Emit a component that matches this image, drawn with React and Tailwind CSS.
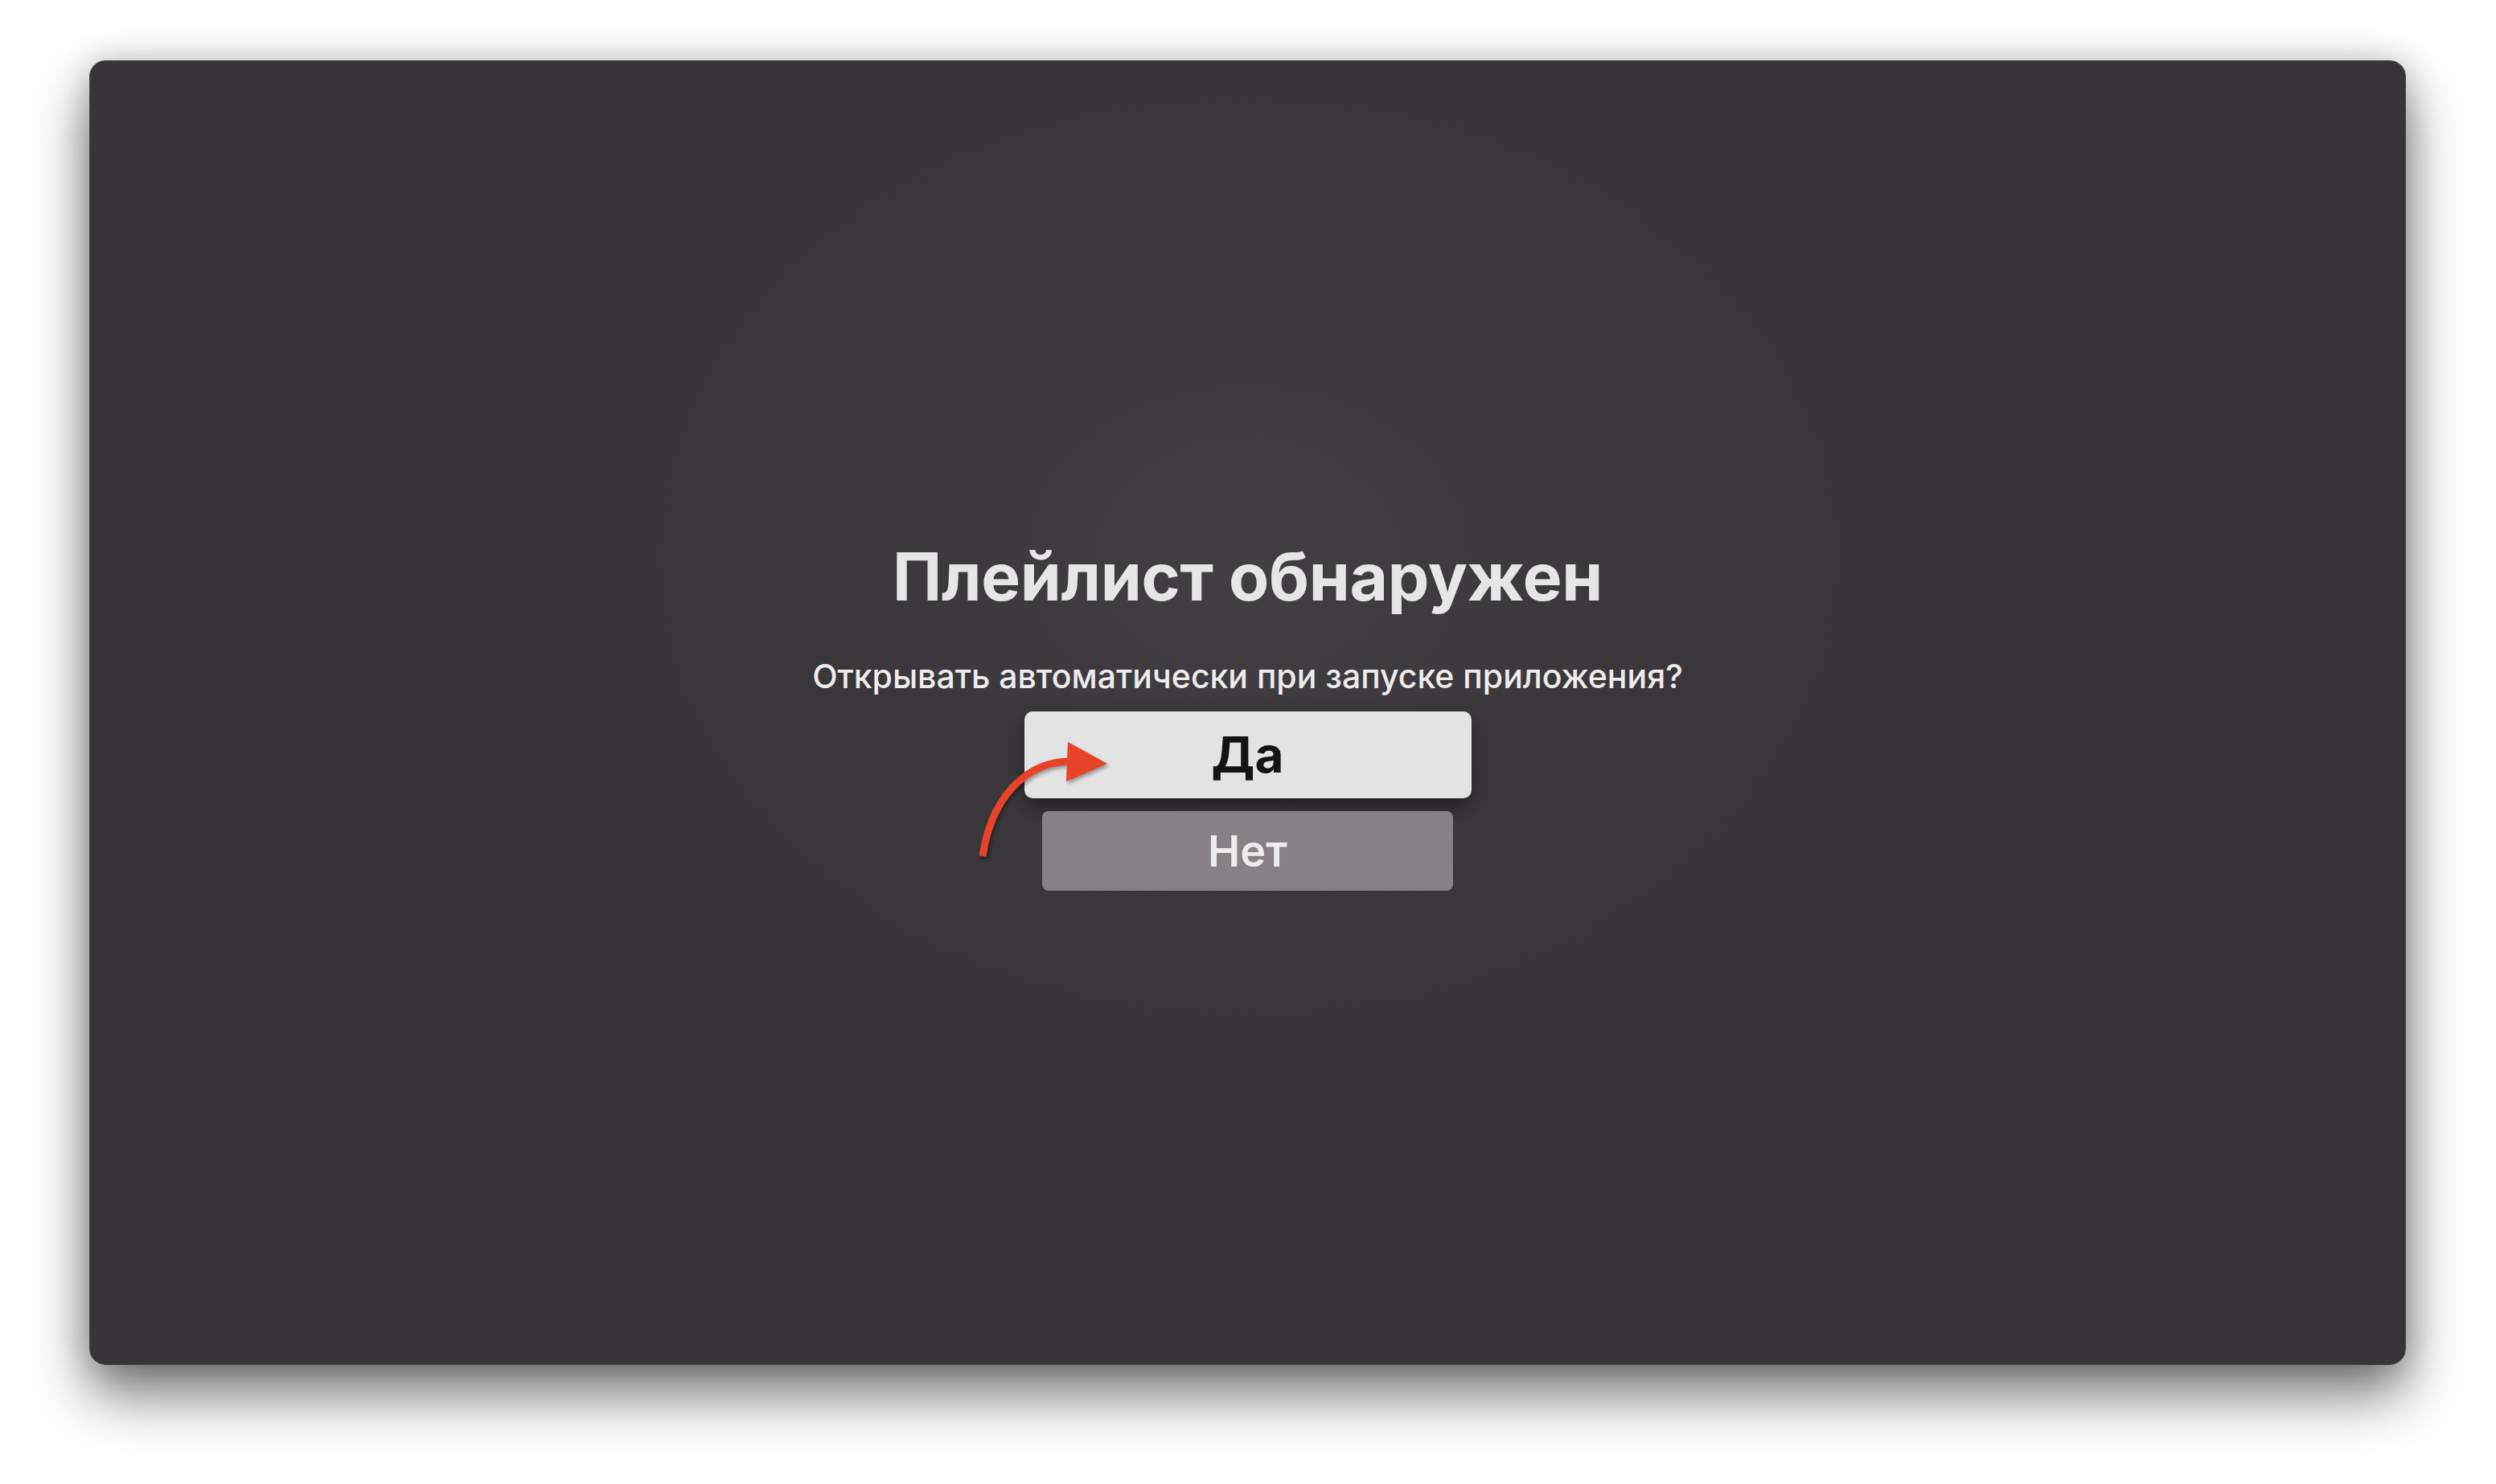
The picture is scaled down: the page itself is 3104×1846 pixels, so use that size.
import React from "react";

export default function App() {
  return (
    <div
      className="w-[3104px] h-[1846px] bg-white pt-[75px] pl-[111px]"
      style={{ fontFamily: "Inter, 'Noto Sans', sans-serif" }}
    >
      <div className="relative w-[2881px] h-[1623px] rounded-[20px] overflow-hidden border border-[#4a474b] shadow-[0_36px_70px_rgba(0,0,0,0.55),0_0_40px_rgba(0,0,0,0.18)] bg-[radial-gradient(ellipse_900px_700px_at_50%_38%,#423f43_0%,#3a373a_60%,#383538_100%)] flex flex-col items-center pt-[601px]">
        <h1 className="text-[82px] leading-none font-bold text-[#e6e6e6] tracking-[-0.3px]">
          Плейлист обнаружен
        </h1>
        <p className="mt-[62px] text-[41px] leading-none font-medium text-[#ececec]">
          Открывать автоматически при запуске приложения?
        </p>
        <div className="relative mt-[23px] flex flex-col items-center">
          <button className="w-[556px] h-[108px] rounded-[10px] bg-[#e3e3e3] shadow-[0_10px_24px_rgba(0,0,0,0.45)] flex items-center justify-center text-[62px] font-bold text-[#141414] leading-none">
            Да
          </button>
          <button className="mt-[16px] w-[511px] h-[99px] rounded-[8px] bg-[#858185] flex items-center justify-center text-[54px] font-semibold text-[#ececec] leading-none">
            Нет
          </button>
          <svg
            className="absolute left-[-60px] top-[30px] drop-shadow-[2px_3px_2px_rgba(0,0,0,0.35)]"
            width="170"
            height="160"
            viewBox="0 0 170 160"
          >
            <path
              d="M8 150 C 18 80, 60 32, 118 32"
              fill="none"
              stroke="#e8432a"
              strokeWidth="9"
            />
            <polygon points="114,8 163,35 112,57" fill="#e8432a" />
          </svg>
        </div>
      </div>
    </div>
  );
}
